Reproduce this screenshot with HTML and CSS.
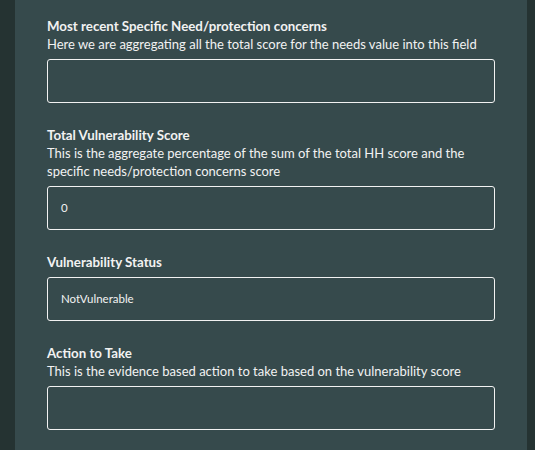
FILE: index.html
```html
<!DOCTYPE html>
<html lang="en">
<head>
    <meta charset="UTF-8">
    <meta name="viewport" content="width=device-width, initial-scale=1.0">
    <title>Vulnerability Assessment</title>
    <link rel="stylesheet" href="styles.css">
</head>
<body>
    <div class="panel">
        <!-- Specific needs -->
        <div class="field">
            <label class="field-label">Most recent Specific Need/protection concerns</label>
            <p class="field-hint">Here we are aggregating all the total score for the needs value into this field</p>
            <div class="field-input"></div>
        </div>
        <!-- Total score -->
        <div class="field">
            <label class="field-label">Total Vulnerability Score</label>
            <p class="field-hint">This is the aggregate percentage of the sum of the total HH score and the specific needs/protection concerns score</p>
            <div class="field-input">0</div>
        </div>
        <!-- Status -->
        <div class="field">
            <label class="field-label">Vulnerability Status</label>
            <div class="field-input">NotVulnerable</div>
        </div>
        <!-- Action -->
        <div class="field">
            <label class="field-label">Action to Take</label>
            <p class="field-hint">This is the evidence based action to take based on the vulnerability score</p>
            <div class="field-input"></div>
        </div>
    </div>
</body>
</html>
```

FILE: styles.css
```css
/* styles.css */
body {
margin: 0;
background-color: #253332;
font-family: Lato, sans-serif;
color: #f2f2f2;
}

.panel {
margin: 0 8px 0 15px;
padding: 18px 32px 20px;
background-color: #364a4c;
min-height: 450px;
box-sizing: border-box;
}

.field {
display: flex;
flex-direction: column;
margin-bottom: 24px;
}

.field-label {
font-size: 13.3px;
font-weight: bold;
line-height: 17px;
}

.field-hint {
margin: 0;
font-size: 13px;
line-height: 18px;
}

.field-input {
margin-top: 6px;
height: 42px;
border: 1px solid #f2f2f2;
border-radius: 3px;
padding: 0 13px;
font-size: 11.5px;
line-height: 42px;
}
```
